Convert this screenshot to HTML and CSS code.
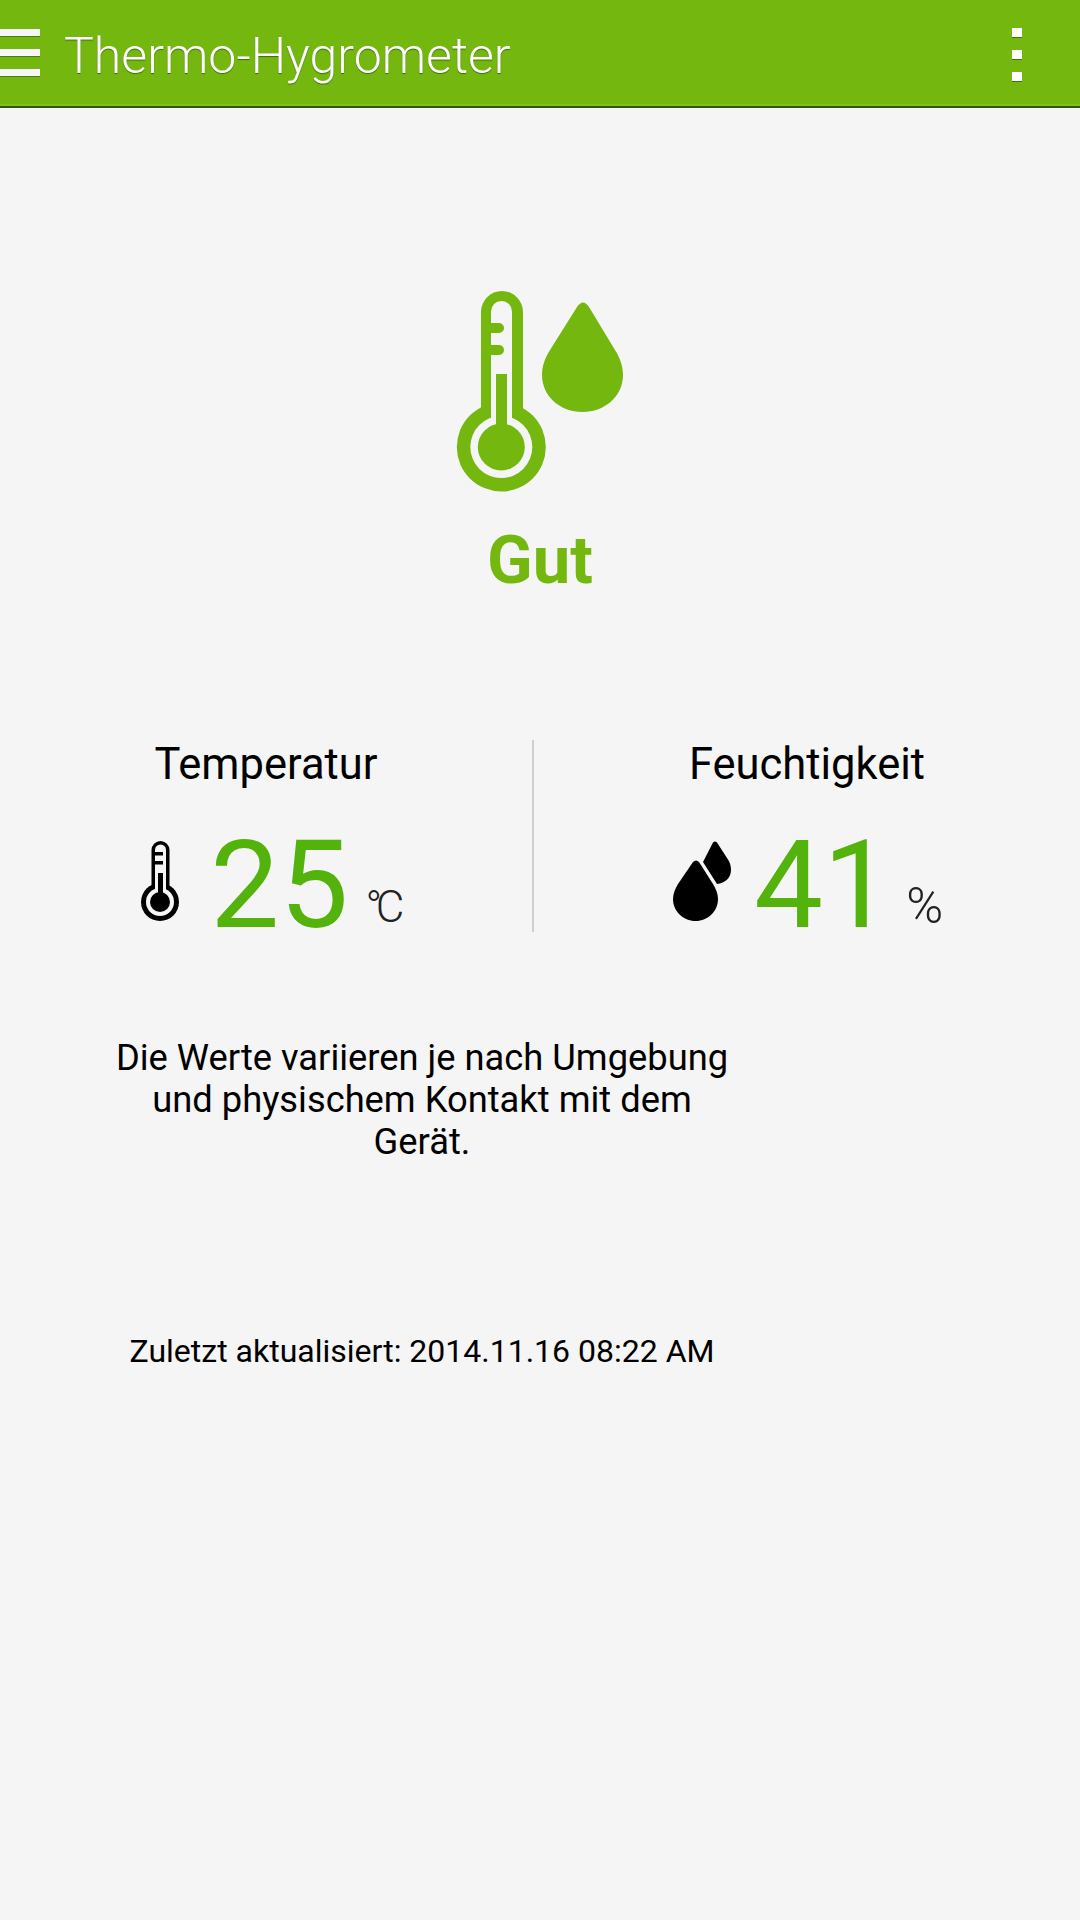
FILE: index.html
```html
<!DOCTYPE html>
<html lang="en">
<head>
    <meta charset="UTF-8">
    <meta name="viewport" content="width=device-width, initial-scale=1.0">
    <title>Thermo-Hygrometer</title>
    <link rel="stylesheet" href="styles.css">
</head>
<body>
    <header class="app-bar">
        <div class="nav-icon">
            <span></span>
            <span></span>
            <span></span>
        </div>
        <h1 class="app-title">Thermo-Hygrometer</h1>
        <div class="more-icon">
            <span></span>
            <span></span>
            <span></span>
        </div>
    </header>

    <section class="status">
        <svg class="status-icon" width="180" height="210" viewBox="0 0 180 210">
            <!-- thermometer: outer shape, hollow inside, then the mercury -->
            <rect class="status-fill" x="31" y="6" width="42" height="140" rx="21"/>
            <circle class="status-fill" cx="51.300" cy="162" r="44.500"/>
            <rect class="status-hole" x="41" y="16" width="21" height="130" rx="10.500"/>
            <circle class="status-hole" cx="51.300" cy="162" r="31"/>
            <rect class="status-fill" x="36" y="38" width="18" height="10" rx="5"/>
            <rect class="status-fill" x="36" y="60" width="18" height="10" rx="5"/>
            <rect class="status-fill" x="46" y="89" width="11" height="60"/>
            <circle class="status-fill" cx="51.300" cy="162" r="23.500"/>
            <path class="status-fill" d="M127 22Q133 13 139 22L165 65C170 73 173 81 173 90C173 111 155 127 132.500 127C110 127 92 111 92 90C92 81 95 73 100 65Z"/>
        </svg>
        <div class="status-label">Gut</div>
    </section>

    <section class="readings">
        <div class="reading">
            <h2 class="reading-title">Temperatur</h2>
            <div class="reading-value value-temp">
                <svg class="reading-icon icon-temp" width="38" height="82" viewBox="0 0 38 82">
                    <rect x="10.500" y="0" width="18" height="60" rx="9"/>
                    <circle cx="19" cy="61" r="19"/>
                    <rect class="icon-hole" x="14" y="3.500" width="11" height="50" rx="5.500"/>
                    <circle class="icon-hole" cx="19" cy="61" r="14"/>
                    <rect x="14" y="11" width="8" height="3.500"/>
                    <rect x="14" y="20" width="8" height="3.500"/>
                    <rect x="17" y="32" width="5" height="26"/>
                    <circle cx="19" cy="61" r="10"/>
                </svg>
                <span class="reading-number">25</span>
                <span class="reading-unit unit-temp">°C</span>
            </div>
        </div>
        <div class="reading">
            <h2 class="reading-title">Feuchtigkeit</h2>
            <div class="reading-value value-humidity">
                <svg class="reading-icon icon-drop" width="58" height="82" viewBox="0 0 58 82">
                    <path d="M40 1.500Q42-.5 44 1.500L54 17C57 21 58 25 58 29C58 37 52 42 44 43L30 21Z"/>
                    <path d="M20 21Q23 18 26 21L40 43C43 48 45 53 45 58C45 70 35 80 22.500 80C10 80 0 70 0 58C0 53 2 48 5 43Z"/>
                </svg>
                <span class="reading-number">41</span>
                <span class="reading-unit unit-percent">%</span>
            </div>
        </div>
    </section>

    <p class="note">Die Werte variieren je nach Umgebung und physischem Kontakt mit dem Gerät.</p>

    <p class="updated">Zuletzt aktualisiert: 2014.11.16 08:22 AM</p>
</body>
</html>
```

FILE: styles.css
```css
* {
    margin: 0;
    padding: 0;
    box-sizing: border-box;
}

body {
    font-family: Roboto, 'Liberation Sans', sans-serif;
    background: #f5f5f5;
    width: 1080px;
    height: 1920px;
    overflow: hidden;
    color: #000;
}

.app-bar {
    height: 108px;
    background: #74b80f;
    border-bottom: 2px solid #34530c;
    box-shadow: inset 0 -2px 0 #82c020;
    display: flex;
    align-items: center;
}

.nav-icon {
    width: 40px;
    display: flex;
    flex-direction: column;
    gap: 13px;
    margin-top: -1px;
}

.nav-icon span {
    height: 7px;
    background: #f7f7f7;
    box-shadow: 0 1px 0 #4a7a10;
}

.app-title {
    font-size: 50px;
    font-weight: 300;
    color: #fff;
    margin-left: 24px;
    margin-top: 5px;
    text-shadow: 0 1px 1px #3f6a0c;
}

.more-icon {
    margin-left: auto;
    margin-right: 58px;
    display: flex;
    flex-direction: column;
    gap: 13px;
    margin-top: 3px;
}

.more-icon span {
    width: 10px;
    height: 9px;
    background: #fff;
    box-shadow: 0 1px 0 #456f0c;
}

.status {
    margin-top: 177px;
    display: flex;
    flex-direction: column;
    align-items: center;
}

.status-icon {
    display: block;
}

.status-fill {
    fill: #74b80f;
}

.status-hole,
.icon-hole {
    fill: #f5f5f5;
}

.status-label {
    font-size: 67px;
    font-weight: 700;
    color: #74b80f;
    line-height: 75px;
    margin-top: 28px;
}

.readings {
    margin-top: 142px;
    display: grid;
    grid-template-columns: 534px 1fr;
    grid-template-rows: 192px;
}

.reading {
    display: flex;
    flex-direction: column;
    align-items: center;
}

.reading:first-child {
    border-right: 2px solid #cfcfcf;
}

.reading-title {
    font-size: 43.500px;
    font-weight: 400;
    line-height: 50px;
}

.reading-value {
    display: flex;
    align-items: flex-end;
    margin-top: 40px;
    height: 110px;
    flex-shrink: 0;
}

.value-temp {
    padding-left: 7px;
}

.value-humidity {
    padding-left: 2px;
}

.reading-icon {
    display: block;
    margin-bottom: 17px;
}

.icon-temp {
    margin-right: 31px;
}

.icon-drop {
    margin-right: 23px;
}

.reading-number {
    font-size: 123px;
    font-weight: 400;
    color: #53b30c;
    line-height: 110px;
}

.reading-unit {
    font-weight: 300;
    color: #222;
    line-height: 50px;
}

.unit-temp {
    font-size: 44px;
    margin-left: 17px;
    margin-bottom: 8px;
    letter-spacing: -6.500px;
}

.unit-percent {
    font-size: 50px;
    margin-left: 14px;
    margin-bottom: 9px;
}

.note {
    margin: 105px 0 0 112px;
    width: 620px;
    font-size: 36.300px;
    line-height: 42px;
    text-align: center;
}

.updated {
    margin: 167px 0 0 112px;
    width: 620px;
    font-size: 32px;
    line-height: 42px;
    text-align: center;
}
```
